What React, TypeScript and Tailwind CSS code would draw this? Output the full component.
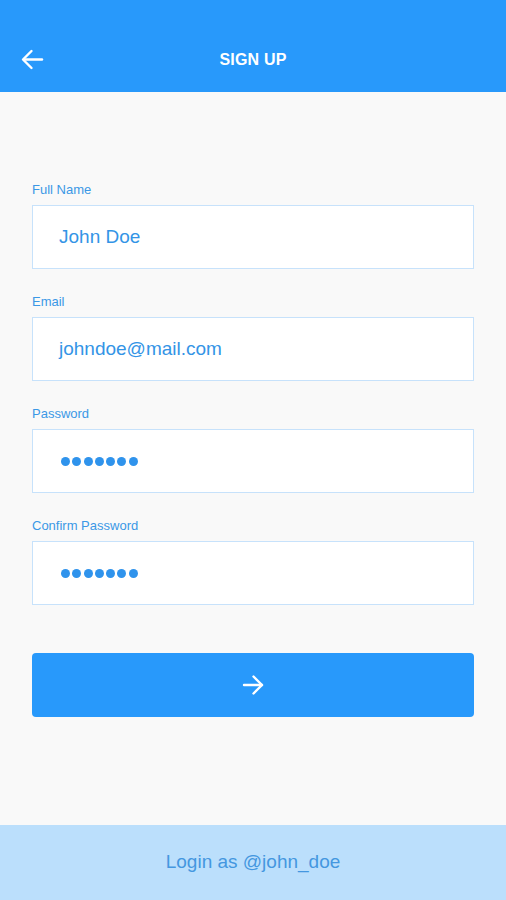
import React from 'react';

const fields = [
  { label: 'Full Name', value: 'John Doe' },
  { label: 'Email', value: 'johndoe@mail.com' },
  { label: 'Password', dots: 7 },
  { label: 'Confirm Password', dots: 7 },
];

const App: React.FC = () => {
  return (
    <div className="h-[900px] w-full flex flex-col bg-[#f9f9f9] font-['Liberation_Sans',Arial,sans-serif]">
      <header className="h-[92px] bg-[#2899fb] pt-[28px] flex items-center relative">
        <svg className="absolute left-[21px] top-[49px]" width="23" height="21" viewBox="0 0 23 21" fill="none" stroke="white" strokeWidth="2.4" strokeLinecap="round" strokeLinejoin="round">
          <path d="M21 10.5H3" />
          <path d="M10.5 2L2 10.5l8.5 8.5" />
        </svg>
        <h1 className="w-full text-center text-white text-[16px] font-bold tracking-[0.2px]">SIGN UP</h1>
      </header>

      <div className="px-[32px] pt-[90px] flex flex-col">
        {fields.map((f, i) => (
          <div key={i} className={i > 0 ? 'mt-[25px]' : ''}>
            <div className="text-[13px] leading-[16px] text-[#3b98e6] mb-[7px]">{f.label}</div>
            <div className="h-[64px] bg-white border border-[#c7e2fb] flex items-center pl-[26px]">
              {f.value ? (
                <span className="text-[19px] text-[#3394e6]">{f.value}</span>
              ) : (
                <div className="flex gap-[2.3px] pl-[2px] pt-[1px]">
                  {Array.from({ length: f.dots ?? 0 }).map((_, j) => (
                    <span key={j} className="w-[9px] h-[9px] rounded-full bg-[#2f93ec]" />
                  ))}
                </div>
              )}
            </div>
          </div>
        ))}

        <button className="mt-[48px] h-[64px] rounded-[4px] bg-[#2899fb] flex items-center justify-center">
          <svg width="22" height="22" viewBox="0 0 22 22" fill="none" stroke="white" strokeWidth="2.4" strokeLinecap="round" strokeLinejoin="round">
            <path d="M2 11h18" />
            <path d="M11.5 2.5L20 11l-8.5 8.5" />
          </svg>
        </button>
      </div>

      <div className="flex-1" />

      <footer className="h-[75px] bg-[#bbdffc] flex items-center justify-center">
        <span className="text-[19px] text-[#4497e0]">Login as @john_doe</span>
      </footer>
    </div>
  );
};

export default App;
